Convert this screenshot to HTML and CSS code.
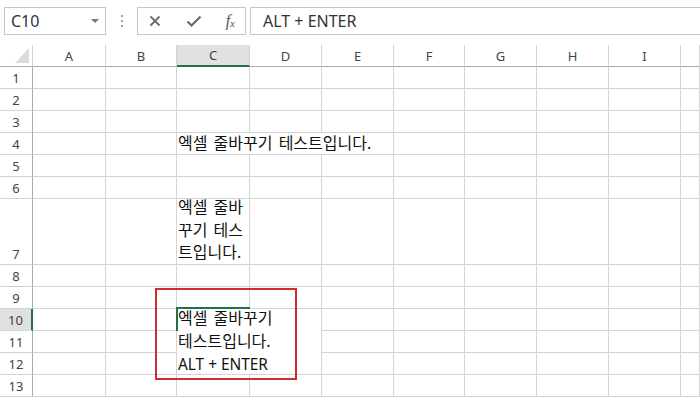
FILE: index.html
```html
<!DOCTYPE html>
<html lang="ko">
<head>
<meta charset="utf-8">
<link rel="stylesheet" href="styles.css">
</head>
<body>
<div class="toolbar">
  <div class="namebox"><span>C10</span><span class="dd"></span></div>
  <div class="dots"><i></i><i></i><i></i></div>
  <div class="fbtns">
    <svg class="ic" width="14" height="14" viewBox="0 0 14 14"><path d="M2.5 2.5 L11.5 11.5 M11.5 2.5 L2.5 11.5" stroke="#6a6a6a" stroke-width="1.8" fill="none"/></svg>
    <svg class="ic" width="16" height="14" viewBox="0 0 16 14"><path d="M1.5 7.5 L5.5 11.5 L14.5 2.5" stroke="#6a6a6a" stroke-width="2.2" fill="none"/></svg>
    <span class="fx">f<sub>x</sub></span>
  </div>
  <div class="finput">ALT + ENTER</div>
</div>
<div class="sheet">
  <div class="corner"><span class="tri"></span></div>
  <div class="ch">A</div><div class="ch">B</div><div class="ch sel">C</div><div class="ch">D</div><div class="ch">E</div><div class="ch">F</div><div class="ch">G</div><div class="ch">H</div><div class="ch">I</div><div class="ch"></div>

  <div class="rh">1</div><div class="c"></div><div class="c"></div><div class="c"></div><div class="c"></div><div class="c"></div><div class="c"></div><div class="c"></div><div class="c"></div><div class="c"></div><div class="c"></div>
  <div class="rh">2</div><div class="c"></div><div class="c"></div><div class="c"></div><div class="c"></div><div class="c"></div><div class="c"></div><div class="c"></div><div class="c"></div><div class="c"></div><div class="c"></div>
  <div class="rh">3</div><div class="c"></div><div class="c"></div><div class="c"></div><div class="c"></div><div class="c"></div><div class="c"></div><div class="c"></div><div class="c"></div><div class="c"></div><div class="c"></div>
  <div class="rh">4</div><div class="c"></div><div class="c"></div><div class="c span3 txt">엑셀 줄바꾸기 테스트입니다.</div><div class="c"></div><div class="c"></div><div class="c"></div><div class="c"></div><div class="c"></div>
  <div class="rh">5</div><div class="c"></div><div class="c"></div><div class="c"></div><div class="c"></div><div class="c"></div><div class="c"></div><div class="c"></div><div class="c"></div><div class="c"></div><div class="c"></div>
  <div class="rh">6</div><div class="c"></div><div class="c"></div><div class="c"></div><div class="c"></div><div class="c"></div><div class="c"></div><div class="c"></div><div class="c"></div><div class="c"></div><div class="c"></div>
  <div class="rh tall">7</div><div class="c"></div><div class="c"></div><div class="c txt wrap"><div class="inner">엑셀 줄바<br>꾸기 테스<br>트입니다.</div></div><div class="c"></div><div class="c"></div><div class="c"></div><div class="c"></div><div class="c"></div><div class="c"></div><div class="c"></div>
  <div class="rh">8</div><div class="c"></div><div class="c"></div><div class="c"></div><div class="c"></div><div class="c"></div><div class="c"></div><div class="c"></div><div class="c"></div><div class="c"></div><div class="c"></div>
  <div class="rh">9</div><div class="c"></div><div class="c"></div><div class="c"></div><div class="c"></div><div class="c"></div><div class="c"></div><div class="c"></div><div class="c"></div><div class="c"></div><div class="c"></div>
  <div class="rh rsel">10</div><div class="c"></div><div class="c"></div><div class="c edit txt"><span class="gtop"></span><span class="gleft"></span><div class="inner">엑셀 줄바꾸기<br>테스트입니다.<br><span class="lat">ALT + ENTER</span></div></div><div class="c"></div><div class="c"></div><div class="c"></div><div class="c"></div><div class="c"></div><div class="c"></div>
  <div class="rh">11</div><div class="c"></div><div class="c"></div><div class="c"></div><div class="c"></div><div class="c"></div><div class="c"></div><div class="c"></div><div class="c"></div>
  <div class="rh">12</div><div class="c"></div><div class="c"></div><div class="c"></div><div class="c"></div><div class="c"></div><div class="c"></div><div class="c"></div><div class="c"></div>
  <div class="rh">13</div><div class="c"></div><div class="c"></div><div class="c"></div><div class="c"></div><div class="c"></div><div class="c"></div><div class="c"></div><div class="c"></div><div class="c"></div><div class="c"></div>
</div>
<div class="redbox"></div>
</body>
</html>
```
FILE: styles.css
```css
* { box-sizing: border-box; }
html, body { margin: 0; padding: 0; background: #fff; overflow: hidden; }
body { width: 700px; height: 399px; font-family: "Noto Sans", "Noto Sans CJK KR", sans-serif; color: #222; position: relative; }

.toolbar { height: 45px; display: flex; align-items: flex-start; padding-top: 7px; }
.namebox { margin-left: 4px; width: 102px; height: 28px; border: 1px solid #c6c6c6; display: flex; align-items: center; justify-content: space-between; padding: 0 5px 0 6px; font-size: 16px; color: #333; }
.dd { width: 0; height: 0; border-left: 4px solid transparent; border-right: 4px solid transparent; border-top: 4px solid #7a7a7a; margin-right: 1px; }
.dots { width: 31px; height: 28px; display: flex; flex-direction: column; align-items: center; justify-content: center; gap: 3px; }
.dots i { width: 2px; height: 2px; background: #a0a0a0; display: block; }
.fbtns { width: 109px; height: 28px; border: 1px solid #c6c6c6; display: flex; align-items: center; justify-content: space-between; padding: 0 10px 0 10px; }
.fx { font-family: "Liberation Serif", serif; font-style: italic; font-size: 16px; color: #555; line-height: 1; }
.fx sub { font-size: 11px; vertical-align: -1px; }
.finput { margin-left: 4px; flex: 1; height: 28px; border: 1px solid #c6c6c6; border-right: none; font-size: 16px; color: #333; padding-left: 12px; line-height: 26px; }

.sheet { display: grid; grid-template-columns: 33px 73px 71px 73px 72px 72px 71px 72px 72px 72px 1fr;
  grid-template-rows: 22px repeat(6, 22px) 66px repeat(6, 22px); }
.corner { border-right: 1px solid #d4d4d4; border-bottom: 1px solid #ababab; position: relative; }
.tri { position: absolute; left: 15px; top: 3px; width: 0; height: 0; border-left: 14px solid transparent; border-bottom: 15px solid #dcdcdc; }
.ch { border-right: 1px solid #d4d4d4; border-bottom: 1px solid #ababab; font-size: 13px; color: #444; display: flex; align-items: center; justify-content: center; }
.ch.sel { background: #e1e1e1; border-bottom: 2px solid #217346; }
.rh { border-right: 1px solid #ababab; border-bottom: 1px solid #d4d4d4; font-size: 13px; color: #444; display: flex; align-items: center; justify-content: center; }
.rh.tall { align-items: flex-end; padding-bottom: 1px; }
.rh.rsel { background: #e1e1e1; border-right: 2px solid #217346; }
.c { border-right: 1px solid #d4d4d4; border-bottom: 1px solid #d4d4d4; background: #fff; }
.txt { font-size: 16px; color: #111; padding-left: 1px; white-space: nowrap; line-height: 21px; word-spacing: 2px; }
.span3 { grid-column: span 3; }
.wrap { line-height: 22.5px; }
.wrap .inner { margin-top: -3px; }
.edit { grid-column: span 2; grid-row: span 3; position: relative; line-height: 23px; }
.edit .inner { margin-top: -2px; }
.lat { font-size: 15.4px; word-spacing: 0; }
.gtop { position: absolute; left: -1px; top: -2px; width: 74px; height: 2px; background: #217346; }
.gleft { position: absolute; left: -1px; top: -2px; width: 2px; height: 24px; background: #217346; }
.redbox { position: absolute; left: 155px; top: 288px; width: 142px; height: 92px; border: 2px solid #d22b2f; }
```
